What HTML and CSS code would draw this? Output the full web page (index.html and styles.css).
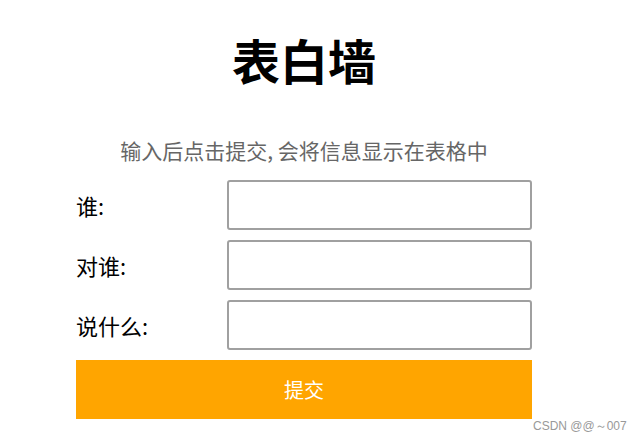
FILE: index.html
```html
<!DOCTYPE html>
<html lang="zh">
<head>
<meta charset="utf-8">
<title>表白墙</title>
<link rel="stylesheet" href="styles.css">
</head>
<body>
<div class="container">
  <h1 class="title">表白墙</h1>
  <p class="hint">输入后点击提交, 会将信息显示在表格中</p>
  <div class="row"><span class="label">谁:</span><input class="field" type="text"></div>
  <div class="row"><span class="label">对谁:</span><input class="field" type="text"></div>
  <div class="row"><span class="label">说什么:</span><input class="field" type="text"></div>
  <button class="submit" type="button">提交</button>
</div>
<div class="mark">CSDN @@～007</div>
</body>
</html>
```

FILE: styles.css
```css
html, body {
  margin: 0;
  padding: 0;
  background: #fff;
  font-family: "Noto Sans CJK SC", "Noto Sans", sans-serif;
}
.container {
  width: 456px;
  margin-left: 76px;
  padding-top: 27px;
  display: flex;
  flex-direction: column;
}
.title {
  margin: 0;
  font-size: 48px;
  line-height: 64px;
  font-weight: 700;
  text-align: center;
  color: #000;
}
.hint {
  margin: 44px 0 15px;
  font-size: 21px;
  line-height: 30px;
  color: #666;
  text-align: center;
}
.row {
  display: flex;
  align-items: center;
  height: 50px;
  margin-bottom: 10px;
}
.label {
  width: 151px;
  font-size: 22px;
  color: #000;
}
.field {
  box-sizing: border-box;
  width: 305px;
  height: 50px;
  border: 2px solid #a0a0a0;
  border-radius: 3px;
  padding: 0 8px;
  margin: 0;
  outline: none;
}
.submit {
  height: 59px;
  border: none;
  background: #ffa500;
  color: #fff;
  font-family: inherit;
  font-size: 20px;
  padding: 0;
  margin: 0;
}
.mark {
  position: absolute;
  left: 533px;
  top: 417px;
  font-family: "Liberation Sans", Arial, sans-serif;
  font-size: 12px;
  line-height: 18px;
  color: #999;
}
```
